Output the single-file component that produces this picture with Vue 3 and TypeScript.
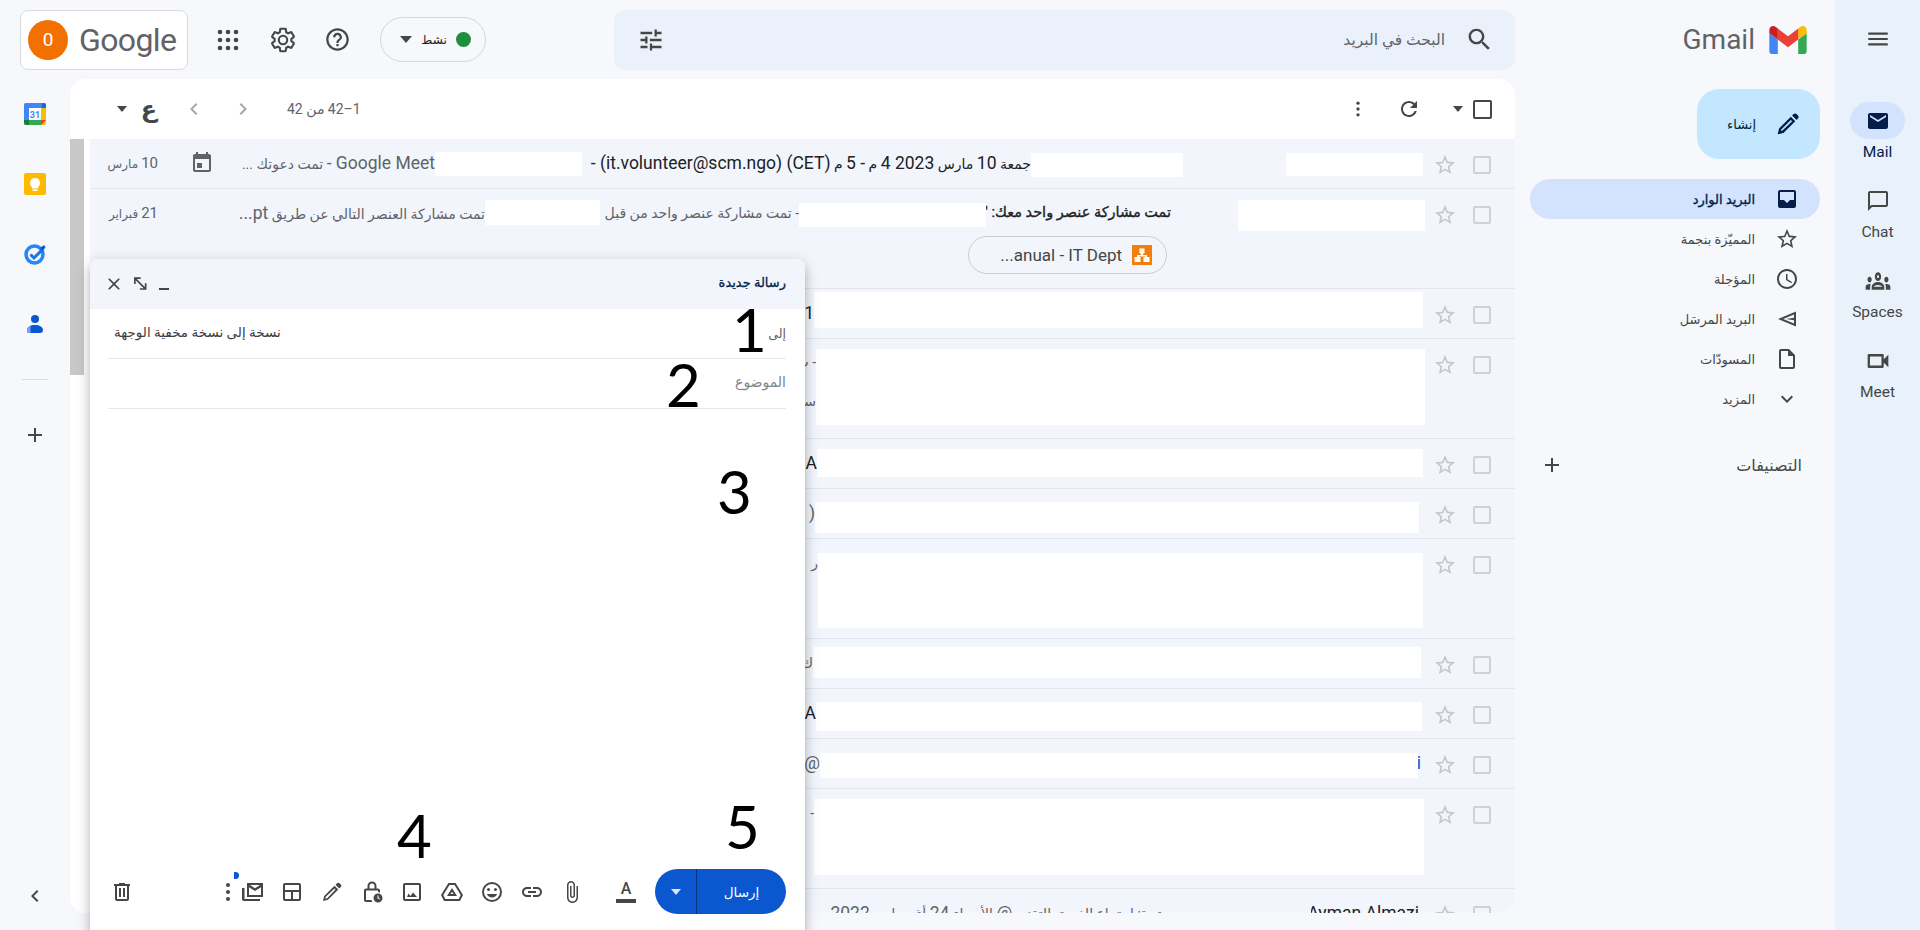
<script setup lang="ts">
interface Cell {
  kind: 'gap' | 'mask' | 'text'
  w: number
  top?: number
  h?: number
  text?: string
  tone?: string
}

interface Row {
  h: number
  cells: Cell[]
  date?: string
  event?: boolean
  chip?: boolean
}

const gap = (w: number): Cell => ({ kind: 'gap', w })
const mask = (w: number, top: number, h: number): Cell => ({ kind: 'mask', w, top, h })
const text = (w: number, t: string, tone = 'grey'): Cell => ({ kind: 'text', w, text: t, tone })

const rows: Row[] = [
  {
    h: 50,
    date: '10 مارس',
    event: true,
    cells: [
      gap(7), mask(137, 14, 23), gap(103), mask(152, 14, 24),
      text(449, 'جمعة 10 مارس 2023 4 م - 5 م (CET) (it.volunteer@scm.ngo) -', 'dark'),
      mask(147, 13, 24),
      text(207, 'Google Meet - تمت دعوتك ...'),
    ],
  },
  {
    h: 100,
    date: '21 فبراير',
    chip: true,
    cells: [
      gap(5), mask(187, 11, 31), gap(67),
      text(185, "تمت مشاركة عنصر واحد معك: '", 'bold'),
      mask(187, 14, 24),
      text(199, '- تمت مشاركة عنصر واحد من قبل'),
      mask(115, 11, 25),
      text(248, 'تمت مشاركة العنصر التالي عن طريق pt...'),
    ],
  },
  { h: 50, cells: [gap(7), mask(609, 3, 36), text(30, '21', 'dark')] },
  { h: 100, cells: [gap(5), mask(609, 10, 76), text(30, '- ت\nسر', 'grey two')] },
  { h: 50, cells: [gap(7), mask(606, 10, 28), text(30, 'n A', 'dark')] },
  { h: 50, cells: [gap(11), mask(604, 13, 31), text(30, '(')] },
  { h: 100, cells: [gap(7), mask(605, 14, 75), text(30, 'ر')] },
  { h: 50, cells: [gap(9), mask(608, 8, 31), text(30, 'ك')] },
  { h: 50, cells: [gap(8), mask(606, 13, 29), text(30, 'n A', 'dark')] },
  { h: 50, cells: [gap(9), text(3, 'i', 'link'), mask(598, 14, 25), text(30, '@')] },
  { h: 100, cells: [gap(6), mask(610, 10, 76), text(30, '-')] },
  {
    h: 50,
    cells: [
      gap(11), text(108, 'Ayman Almazi', 'dark'), gap(141),
      text(420, 'دعوة: اجتماع الفريق التقني @ الأربعاء 24 أغسطس 2022'),
    ],
  },
]

// latin runs are set larger than the arabic around them, like in the shot
const runs = (t = '') =>
  t
    .split(/([A-Za-z0-9@.()\-–]+(?: [A-Za-z0-9@.()\-–]+)*)/)
    .filter(Boolean)
    .map((s) => ({ s, lat: /[A-Za-z0-9@(]/.test(s) }))

const paths: Record<string, string> = {
  menu: 'M3 18h18v-2H3v2zm0-5h18v-2H3v2zm0-7v2h18V6H3z',
  search:
    'M15.5 14h-.79l-.28-.27C15.41 12.59 16 11.11 16 9.5 16 5.91 13.09 3 9.5 3S3 5.91 3 9.5 5.91 16 9.5 16c1.61 0 3.09-.59 4.23-1.57l.27.28v.79l5 4.99L20.49 19l-4.99-5zm-6 0C7.01 14 5 11.99 5 9.5S7.01 5 9.5 5 14 7.01 14 9.5 11.99 14 9.5 14z',
  tune: 'M3 17v2h6v-2H3zM3 5v2h10V5H3zm10 16v-2h8v-2h-8v-2h-2v6h2zM7 9v2H3v2h4v2h2V9H7zm14 4v-2H11v2h10zm-6-4h2V7h4V5h-4V3h-2v6z',
  help: 'M11 18h2v-2h-2v2zm1-16C6.48 2 2 6.48 2 12s4.48 10 10 10 10-4.48 10-10S17.52 2 12 2zm0 18c-4.41 0-8-3.59-8-8s3.59-8 8-8 8 3.59 8 8-3.59 8-8 8zm0-14c-2.21 0-4 1.79-4 4h2c0-1.1.9-2 2-2s2 .9 2 2c0 2-3 1.75-3 5h2c0-2.25 3-2.5 3-5 0-2.21-1.79-4-4-4z',
  refresh:
    'M17.65 6.35C16.2 4.9 14.21 4 12 4c-4.42 0-7.99 3.58-7.99 8s3.57 8 7.99 8c3.73 0 6.84-2.55 7.73-6h-2.08c-.82 2.33-3.04 4-5.65 4-3.31 0-6-2.69-6-6s2.69-6 6-6c1.66 0 3.14.69 4.22 1.78L13 11h7V4l-2.35 2.35z',
  star: 'M22 9.24l-7.19-.62L12 2 9.19 8.63 2 9.24l5.46 4.73L5.82 21 12 17.27 18.18 21l-1.63-7.03L22 9.24zM12 15.4l-3.76 2.27 1-4.28-3.32-2.88 4.38-.38L12 6.1l1.71 4.04 4.38.38-3.32 2.88 1 4.28L12 15.4z',
  inbox:
    'M19 3H5c-1.1 0-2 .9-2 2v14c0 1.1.9 2 2 2h14c1.1 0 2-.9 2-2V5c0-1.1-.9-2-2-2zm0 10h-4l-3 3-3-3H5V5h14v8z',
  clock:
    'M11.99 2C6.47 2 2 6.48 2 12s4.47 10 9.99 10C17.52 22 22 17.52 22 12S17.52 2 11.99 2zM12 20c-4.42 0-8-3.58-8-8s3.58-8 8-8 8 3.58 8 8-3.58 8-8 8zm.5-13H11v6l5.25 3.15.75-1.23-4.5-2.67z',
  send: 'M21 4.5 3 12l18 7.5v-15zm-2 3v3.3L11 12l8 1.2v3.3L8.2 12 19 7.5z',
  draft: 'M14 2H6c-1.1 0-2 .9-2 2v16c0 1.1.9 2 2 2h12c1.1 0 2-.9 2-2V8l-6-6zM6 20V4h7v5h5v11H6z',
  more: 'M16.59 8.59 12 13.17 7.41 8.59 6 10l6 6 6-6z',
  add: 'M19 13h-6v6h-2v-6H5v-2h6V5h2v6h6v2z',
  chat: 'M20 2H4c-1.1 0-2 .9-2 2v18l4-4h14c1.1 0 2-.9 2-2V4c0-1.1-.9-2-2-2zm0 14H5.17L4 17.17V4h16v12z',
  meet: 'M15 8v8H5V8h10m1-2H4c-.55 0-1 .45-1 1v10c0 .55.45 1 1 1h12c.55 0 1-.45 1-1v-3.5l4 4v-11l-4 4V7c0-.55-.45-1-1-1z',
  mail: 'M20 4H4c-1.1 0-2 .9-2 2v12c0 1.1.9 2 2 2h16c1.1 0 2-.9 2-2V6c0-1.1-.9-2-2-2zm0 4-8 5-8-5V6l8 5 8-5v2z',
  spaces:
    'M4 13c1.1 0 2-.9 2-2s-.9-2-2-2-2 .9-2 2 .9 2 2 2zm1.130 1.100c-.37-.06-.74-.1-1.130-.1-.99 0-1.930.21-2.780.58C.48 14.900 0 15.620 0 16.430V18h4.500v-1.610c0-.83.23-1.610.63-2.290zM20 13c1.100 0 2-.9 2-2s-.9-2-2-2-2 .9-2 2 .9 2 2 2zm4 3.430c0-.81-.48-1.530-1.220-1.850-.85-.37-1.790-.58-2.780-.58-.39 0-.76.04-1.130.1.4.68.63 1.460.63 2.290V18H24v-1.570zm-7.760-2.780C15.070 13.140 13.630 12.750 12 12.750s-3.070.4-4.240.91C6.680 14.130 6 15.210 6 16.390V18h12v-1.610c0-1.180-.68-2.260-1.760-2.740zM8.040 16c.09-.23.13-.39.91-.69.97-.38 1.990-.56 3.050-.56s2.090.18 3.060.56c.77.3.81.46.91.69H8.040zM12 8c.55 0 1 .45 1 1s-.45 1-1 1-1-.45-1-1 .45-1 1-1m0-2c-1.660 0-3 1.340-3 3s1.340 3 3 3 3-1.340 3-3-1.340-3-3-3z',
  compose:
    'M2.500 21.500l1.200-5.300L14.600 5.300l4.100 4.100L7.800 20.300l-5.300 1.200zm3-3 1.400-.4 8.900-8.700-1.200-1.200-8.800 8.900-.3 1.400zM15.800 4.100l1.300-1.300c.8-.8 2-.8 2.800 0l1.300 1.300c.8.8.8 2 0 2.800l-1.300 1.300-4.100-4.100z',
  event:
    'M7 12h5v5H7zM16 1v2H8V1H6v2H5c-1.110 0-2 .9-2 2v14c0 1.100.9 2 2 2h14c1.100 0 2-.9 2-2V5c0-1.100-.9-2-2-2h-1V1h-2zm3 18H5V8h14v11z',
  trash: 'M15 4V3H9v1H4v2h1v13c0 1.100.9 2 2 2h10c1.100 0 2-.9 2-2V6h1V4h-5zm2 15H7V6h10v13zM9 8h2v9H9zm4 0h2v9h-2z',
  attach:
    'M16.500 6v11.500c0 2.210-1.790 4-4 4s-4-1.790-4-4V5c0-1.380 1.120-2.500 2.500-2.500s2.500 1.120 2.500 2.500v10.500c0 .55-.45 1-1 1s-1-.45-1-1V6H10v9.500c0 1.380 1.120 2.500 2.500 2.500s2.500-1.120 2.500-2.500V5c0-2.210-1.790-4-4-4S7 2.790 7 5v12.500c0 3.040 2.460 5.500 5.500 5.500s5.500-2.460 5.500-5.500V6h-1.500z',
  link: 'M3.900 12c0-1.710 1.390-3.100 3.100-3.100h4V7H7c-2.760 0-5 2.240-5 5s2.240 5 5 5h4v-1.900H7c-1.710 0-3.100-1.390-3.100-3.100zM8 13h8v-2H8v2zm9-6h-4v1.900h4c1.710 0 3.100 1.390 3.100 3.100s-1.390 3.100-3.100 3.100h-4V17h4c2.760 0 5-2.240 5-5s-2.240-5-5-5z',
  smile:
    'M12 2a10 10 0 1 0 0 20 10 10 0 0 0 0-20zm0 18a8 8 0 1 1 0-16 8 8 0 0 1 0 16zM8.500 11a1.500 1.500 0 1 0 0-3 1.500 1.500 0 0 0 0 3zm7 0a1.500 1.500 0 1 0 0-3 1.500 1.500 0 0 0 0 3zM12 17.500c2.300 0 4.300-1.500 5.100-3.500H6.900c.8 2 2.800 3.500 5.100 3.500z',
  drive:
    'M8.400 3h7.200L23 15l-3 6H4l-3-6L8.400 3zM9.500 5 3.300 15l2 4h13.400l2-4L14.500 5h-5zM12 8l5 8H7l5-8zm0 3.800L10.600 14h2.800L12 11.800z',
  photo:
    'M21 19V5c0-1.100-.9-2-2-2H5c-1.100 0-2 .9-2 2v14c0 1.100.9 2 2 2h14c1.100 0 2-.9 2-2zM5 5h14v14H5V5zm3.500 8.500 2 2.500 2.500-3.500 4 4.500H7l1.500-3.500z',
  lock:
    'M12 1.500a4.500 4.500 0 0 0-4.500 4.500v2.500H6c-1.100 0-2 .9-2 2V20c0 1.100.9 2 2 2h6.500a6 6 0 0 1-1-2H6v-9.500h12v1.600c.7.100 1.400.300 2 .600V10.500c0-1.100-.9-2-2-2h-1.500V6A4.500 4.500 0 0 0 12 1.500zM9.500 8.500V6a2.500 2.500 0 0 1 5 0v2.500h-5zM18 13.500a4.500 4.500 0 1 0 0 9 4.500 4.500 0 0 0 0-9zm-.5 2h1v2.300l1.600 1-.5.8-2.100-1.300v-2.800z',
  pen: 'M3 21l1.200-5L14.500 5.700l3.800 3.800L8 19.800 3 21zM5.800 16.800l-.6 2 2-.6 8.300-8.700-1-1-8.700 8.300zM15.500 4.700 17 3.200c.7-.7 1.800-.7 2.500 0l1.300 1.300c.7.7.7 1.800 0 2.500l-1.500 1.500-3.800-3.800z',
  template:
    'M19 3H5c-1.100 0-2 .9-2 2v14c0 1.100.9 2 2 2h14c1.100 0 2-.9 2-2V5c0-1.100-.9-2-2-2zM5 5h14v5H5V5zm0 7h6v7H5v-7zm8 7v-7h6v7h-6z',
  multi:
    'M7 3h16v14H7V3zm2 4.300V15h12V7.300l-6 3.700-6-3.700zM10 5l5 3.200L20 5H10zM2 8h2.500v11H20v2H4c-1.100 0-2-.9-2-2V8z',
  close: 'M19 6.410 17.590 5 12 10.590 6.410 5 5 6.410 10.590 12 5 17.590 6.410 19 12 13.410 17.590 19 19 17.590 13.410 12z',
  expand: 'M6 4h8v2H9.400l9.600 9.600V11h2v8h-8v-2h4.600L8 7.400V12H6V4z',
}

const navItems = [
  { icon: 'inbox', label: 'البريد الوارد', active: true },
  { icon: 'star', label: 'المميّزة بنجمة' },
  { icon: 'clock', label: 'المؤجلة' },
  { icon: 'send', label: 'البريد المرسَل' },
  { icon: 'draft', label: 'المسودّات' },
  { icon: 'more', label: 'المزيد' },
]

const railItems = [
  { icon: 'mail', label: 'Mail', active: true },
  { icon: 'chat', label: 'Chat' },
  { icon: 'spaces', label: 'Spaces' },
  { icon: 'meet', label: 'Meet' },
]

const composeTools = ['attach', 'link', 'smile', 'drive', 'photo', 'lock', 'pen', 'template', 'multi']
</script>

<template>
  <div class="app">
    <header class="topbar">
      <div class="account">
        <span class="avatar">0</span>
        <span class="google">Google</span>
      </div>
      <svg class="ic apps" viewBox="0 0 24 24">
        <template v-for="y in [4, 12, 20]" :key="y">
          <circle v-for="x in [4, 12, 20]" :key="x" :cx="x" :cy="y" r="2.3" />
        </template>
      </svg>
      <svg class="gear" viewBox="0 0 24 24">
        <path
          d="M19.140 12.940c.04-.3.06-.61.06-.94 0-.32-.02-.64-.07-.94l2.030-1.580c.18-.14.23-.41.12-.61l-1.920-3.320c-.12-.22-.37-.29-.59-.22l-2.390.96c-.5-.38-1.030-.7-1.620-.94l-.36-2.540c-.04-.24-.24-.41-.48-.41h-3.840c-.24 0-.43.17-.47.41l-.36 2.540c-.59.24-1.130.57-1.620.94l-2.390-.96c-.22-.08-.47 0-.59.22L2.740 8.870c-.12.21-.08.47.12.61l2.030 1.580c-.05.3-.09.63-.09.94s.02.64.07.94l-2.030 1.580c-.18.14-.23.41-.12.61l1.920 3.320c.12.22.37.29.59.22l2.390-.96c.5.38 1.030.7 1.620.94l.36 2.540c.05.24.24.41.48.41h3.840c.24 0 .44-.17.47-.41l.36-2.540c.59-.24 1.130-.56 1.620-.94l2.390.96c.22.08.47 0 .59-.22l1.920-3.320c.12-.22.07-.47-.12-.61l-2.010-1.580zM12 15.600c-1.980 0-3.600-1.620-3.600-3.600s1.620-3.600 3.600-3.600 3.600 1.620 3.600 3.600-1.620 3.600-3.600 3.600z"
        />
      </svg>
      <svg class="ic help" viewBox="0 0 24 24"><path :d="paths.help" /></svg>
      <div class="status">
        <i class="caret" />
        <span>نشط</span>
        <i class="dot" />
      </div>
      <div class="search">
        <svg class="ic tune" viewBox="0 0 24 24"><path :d="paths.tune" /></svg>
        <span class="search-text">البحث في البريد</span>
        <svg class="ic search-ic" viewBox="0 0 24 24"><path :d="paths.search" /></svg>
      </div>
    </header>

    <aside class="addons">
      <svg class="addon" viewBox="0 0 24 24">
        <rect x="1" y="1" width="22" height="22" rx="2" fill="#fbbc04" />
        <path d="M1 6V3a2 2 0 0 1 2-2h16v5z" fill="#4285f4" />
        <path d="M19 1h2a2 2 0 0 1 2 2v3h-4z" fill="#1967d2" />
        <path d="M1 6h5v12H1z" fill="#4285f4" />
        <path d="M1 18h5v5H3a2 2 0 0 1-2-2z" fill="#188038" />
        <path d="M6 18h12v5H6z" fill="#34a853" />
        <path d="M18 18h5l-5 5z" fill="#ea4335" />
        <rect x="6" y="6" width="12" height="12" fill="#fff" />
        <text x="12" y="15.500" class="cal-text">31</text>
      </svg>
      <svg class="addon keep" viewBox="0 0 24 24">
        <rect x="1" y="1" width="22" height="22" rx="2" fill="#ffba00" />
        <path d="M12 6a5 5 0 0 0-3 9v1.500h6V15a5 5 0 0 0-3-9zM9.500 17.500h5V19h-5z" fill="#fff" />
      </svg>
      <svg class="addon tasks" viewBox="0 0 24 24">
        <circle cx="11.500" cy="12.500" r="8.500" fill="none" stroke="#2684fc" stroke-width="3.500" />
        <path d="M7.500 12.500l3.500 3.500 8-8" fill="none" stroke="#1a73e8" stroke-width="3" />
        <path d="M17 6l4-3 1.500 2.500-3 3.500z" fill="#0b57d0" />
      </svg>
      <svg class="addon contacts" viewBox="0 0 24 24">
        <circle cx="12" cy="7" r="4" fill="#0b57d0" />
        <path d="M4 21v-3c0-3 3.500-5 8-5s8 2 8 5c0 2-1 3-3 3z" fill="#0b57d0" />
        <path d="M4 21v-3c0-2 1.500-3.500 3.500-4.200V21z" fill="#79a6ee" />
      </svg>
      <hr class="addon-sep" />
      <svg class="ic addon-add" viewBox="0 0 24 24"><path :d="paths.add" /></svg>
      <svg class="ic addon-hide" viewBox="0 0 24 24"><path d="M15.410 7.410 14 6l-6 6 6 6 1.410-1.410L10.830 12z" /></svg>
    </aside>

    <main class="panel">
      <div class="toolbar">
        <i class="caret small" />
        <span class="ime">ع</span>
        <svg class="ic pager first" viewBox="0 0 24 24"><path d="M15.410 7.410 14 6l-6 6 6 6 1.410-1.410L10.830 12z" /></svg>
        <svg class="ic pager" viewBox="0 0 24 24"><path d="M8.590 16.590 10 18l6-6-6-6-1.410 1.410L13.170 12z" /></svg>
        <span class="count" dir="rtl">1–42 من 42</span>
        <span class="spacer" />
        <svg class="ic tool-dots" viewBox="0 0 24 24">
          <circle cx="12" cy="5" r="2" /><circle cx="12" cy="12" r="2" /><circle cx="12" cy="19" r="2" />
        </svg>
        <svg class="ic tool-refresh" viewBox="0 0 24 24"><path :d="paths.refresh" /></svg>
        <i class="caret small tool-caret" />
        <i class="box dark" />
      </div>
      <div class="list-wrap">
        <div class="scroll"><div class="thumb" /></div>
        <div class="list">
          <div v-for="(row, i) in rows" :key="i" class="row" :style="{ height: row.h + 'px' }">
            <div class="date">
              <span v-for="(run, k) in runs(row.date)" :key="k" :class="{ lat: run.lat }">{{ run.s }}</span>
            </div>
            <div class="event-cell">
              <svg v-if="row.event" class="ic" viewBox="0 0 24 24"><path :d="paths.event" /></svg>
            </div>
            <div class="content">
              <div class="cells">
                <template v-for="(cell, j) in row.cells" :key="j">
                  <div
                    v-if="cell.kind === 'mask'"
                    class="mask"
                    :style="{ width: cell.w + 'px', height: cell.h + 'px', marginTop: cell.top + 'px' }"
                  />
                  <div v-else-if="cell.kind === 'gap'" class="cell-gap" :style="{ width: cell.w + 'px' }" />
                  <div v-else class="cell-text" :class="cell.tone" :style="{ width: cell.w + 'px' }">
                    <span v-for="(run, k) in runs(cell.text)" :key="k" :class="{ lat: run.lat }">{{ run.s }}</span>
                  </div>
                </template>
              </div>
              <div v-if="row.chip" class="chip">
                <svg class="chip-icon" viewBox="0 0 20 20">
                  <rect width="20" height="20" fill="#f37e0b" />
                  <path d="M7.500 3.500h5v5H11V10h4v2h2.500v5h-6v-5H13v-.5H7v.5h1.500v5h-6v-5H5v-2h4V8.500H7.500z" fill="#fff" />
                </svg>
                <span dir="ltr">...anual - IT Dept</span>
              </div>
            </div>
            <svg class="star" viewBox="0 0 24 24"><path :d="paths.star" /></svg>
            <i class="box" />
          </div>
        </div>
      </div>
    </main>

    <nav class="sidebar">
      <div class="brand">
        <span class="gmail">Gmail</span>
        <svg class="gmail-m" viewBox="52 42 88 66">
          <path fill="#4285f4" d="M58 108h14V74L52 59v43c0 3.320 2.690 6 6 6" />
          <path fill="#34a853" d="M120 108h14c3.320 0 6-2.690 6-6V59l-20 15" />
          <path fill="#fbbc04" d="M120 48v26l20-15v-8c0-7.420-8.470-11.650-14.400-7.200" />
          <path fill="#ea4335" d="M72 74V48l24 18 24-18v26L96 92" />
          <path fill="#c5221f" d="M52 51v8l20 15V48l-5.600-4.200c-5.940-4.450-14.400-.22-14.400 7.200" />
        </svg>
      </div>
      <button class="compose-btn">
        <span>إنشاء</span>
        <svg class="nav-ic pencil" viewBox="0 0 24 24"><path :d="paths.compose" /></svg>
      </button>
      <div class="nav">
        <div v-for="item in navItems" :key="item.icon" class="nav-item" :class="{ active: item.active }">
          <span>{{ item.label }}</span>
          <svg class="nav-ic" viewBox="0 0 24 24"><path :d="paths[item.icon]" /></svg>
        </div>
      </div>
      <div class="labels">
        <svg class="ic" viewBox="0 0 24 24"><path :d="paths.add" /></svg>
        <span>التصنيفات</span>
      </div>
    </nav>

    <aside class="rail">
      <svg class="ic rail-menu" viewBox="0 0 24 24"><path :d="paths.menu" /></svg>
      <div v-for="item in railItems" :key="item.label" class="rail-item" :class="[item.icon, { active: item.active }]">
        <div class="rail-pill">
          <svg class="ic" viewBox="0 0 24 24"><path :d="paths[item.icon]" /></svg>
        </div>
        <span>{{ item.label }}</span>
      </div>
    </aside>

    <section class="compose">
      <div class="compose-head">
        <span class="compose-title">رسالة جديدة</span>
        <span class="spacer" />
        <i class="minimize" />
        <svg class="head-ic" viewBox="0 0 24 24"><path :d="paths.expand" /></svg>
        <svg class="head-ic" viewBox="0 0 24 24"><path :d="paths.close" /></svg>
      </div>
      <div class="field">
        <span class="to">إلى</span>
        <span class="spacer" />
        <span class="bcc">نسخة إلى نسخة مخفية الوجهة</span>
      </div>
      <div class="field">
        <span class="subject">الموضوع</span>
      </div>
      <div class="compose-body" />
      <div class="compose-foot">
        <div class="send">
          <span class="send-label">إرسال</span>
          <span class="send-more"><i class="caret light" /></span>
        </div>
        <div class="format">
          <span class="format-a">A</span>
          <i class="format-bar" />
        </div>
        <div class="tools">
          <svg v-for="tool in composeTools" :key="tool" class="tool" viewBox="0 0 24 24"><path :d="paths[tool]" /></svg>
          <div class="tool-more">
            <i /><i /><i />
            <b class="badge" />
          </div>
        </div>
        <span class="spacer" />
        <svg class="tool trash" viewBox="0 0 24 24"><path :d="paths.trash" /></svg>
      </div>
    </section>

    <span class="mark m1">1</span>
    <span class="mark m2">2</span>
    <span class="mark m3">3</span>
    <span class="mark m4">4</span>
    <span class="mark m5">5</span>
  </div>
</template>

<style>
html,
body {
  margin: 0;
  overflow: hidden;
}
</style>

<style scoped>
.app {
  position: relative;
  width: 1920px;
  height: 930px;
  overflow: hidden;
  display: grid;
  grid-template-columns: 70px 1445px 320px 85px;
  grid-template-rows: 79px 851px;
  background: #f6f8fc;
  font-family: Roboto, 'DejaVu Sans', sans-serif;
  color: #202124;
}
.ic {
  width: 24px;
  height: 24px;
  fill: #444746;
  flex: none;
}
.spacer {
  flex: 1;
}
.caret {
  width: 0;
  height: 0;
  border-left: 6px solid transparent;
  border-right: 6px solid transparent;
  border-top: 7px solid #444746;
  flex: none;
}
.caret.small {
  border-left-width: 5px;
  border-right-width: 5px;
  border-top-width: 6px;
}
.caret.light {
  border-top-color: #d6e6ff;
  border-left-width: 5px;
  border-right-width: 5px;
  border-top-width: 6px;
}

/* top */
.topbar {
  grid-column: 1 / 3;
  display: flex;
  align-items: center;
  height: 79px;
  padding: 0 0 0 20px;
  box-sizing: border-box;
}
.account {
  width: 168px;
  height: 60px;
  box-sizing: border-box;
  background: #fff;
  border: 1px solid #dadce0;
  border-radius: 8px;
  display: flex;
  align-items: center;
  padding-left: 7px;
  gap: 11px;
}
.avatar {
  width: 40px;
  height: 40px;
  border-radius: 50%;
  background: #f27000;
  color: #fff;
  font-size: 19px;
  display: flex;
  align-items: center;
  justify-content: center;
}
.google {
  font-size: 32px;
  letter-spacing: -0.6px;
  color: #5f6368;
  line-height: 40px;
}
.apps {
  margin-left: 28px;
}
.gear {
  width: 28px;
  height: 28px;
  margin-left: 29px;
  fill: none;
  stroke: #444746;
  stroke-width: 1.8;
  flex: none;
}
.help {
  width: 27px;
  height: 27px;
  margin-left: 27px;
}
.status {
  width: 106px;
  height: 45px;
  box-sizing: border-box;
  margin-left: 29px;
  border: 1px solid #d3d7dc;
  border-radius: 23px;
  display: flex;
  align-items: center;
  padding: 0 14px 0 19px;
  font-size: 12px;
}
.status span {
  margin-left: 9px;
  width: 26px;
  text-align: center;
  white-space: nowrap;
}
.dot {
  width: 15px;
  height: 15px;
  margin-left: 9px;
  border-radius: 50%;
  background: #1e8e3e;
  flex: none;
}
.search {
  width: 901px;
  height: 60px;
  margin-left: 128px;
  background: #eaf1fb;
  border-radius: 12px;
  display: flex;
  align-items: center;
  padding: 0 21px 0 23px;
  box-sizing: border-box;
}
.tune {
  width: 28px;
  height: 28px;
}
.search-ic {
  width: 29px;
  height: 29px;
}
.search-text {
  flex: 1;
  text-align: right;
  margin-right: 20px;
  font-size: 15.500px;
  color: #5f6368;
}

/* addons */
.addons {
  grid-column: 1;
  grid-row: 2;
  display: flex;
  flex-direction: column;
  align-items: center;
  padding-top: 22px;
}
.addon {
  width: 24px;
  height: 26px;
  flex: none;
}
.cal-text {
  font-size: 9px;
  font-weight: 700;
  fill: #4285f4;
  text-anchor: middle;
}
.keep {
  margin-top: 44px;
}
.tasks {
  margin-top: 44px;
}
.contacts {
  margin-top: 44px;
}
.addon-sep {
  width: 26px;
  margin: 42px 0 0;
  border: 0;
  border-top: 1px solid #dadce0;
}
.addon-add {
  margin-top: 43px;
}
.addon-hide {
  margin-top: 437px;
}

/* mail panel */
.panel {
  grid-column: 2;
  grid-row: 2;
  height: 834px;
  border-radius: 16px;
  background: #fff;
  overflow: hidden;
  display: flex;
  flex-direction: column;
}
.toolbar {
  height: 60px;
  flex: none;
  display: flex;
  align-items: center;
  padding-left: 47px;
  padding-right: 23px;
}
.ime {
  font-size: 24px;
  font-weight: 700;
  margin-left: 10px;
  width: 24px;
  text-align: center;
  color: #444746;
}
.pager {
  fill: #a5a8ab;
}
.pager.first {
  margin-left: 21px;
}
.pager + .pager {
  margin-left: 25px;
}
.count {
  font-size: 14px;
  margin-left: 32px;
  color: #5f6368;
}
.tool-dots {
  width: 20px;
  height: 20px;
}
.tool-refresh {
  margin-left: 29px;
}
.tool-caret {
  margin-left: 32px;
}
.box {
  width: 14px;
  height: 14px;
  margin-left: 10px;
  border: 2px solid #cfd1d4;
  border-radius: 2px;
  flex: none;
}
.box.dark {
  width: 15px;
  height: 15px;
  border-color: #444746;
}
.list-wrap {
  flex: 1;
  display: flex;
  min-height: 0;
}
.scroll {
  width: 20px;
  flex: none;
}
.thumb {
  width: 14px;
  height: 236px;
  background: #c8c8c8;
}
.list {
  flex: 1;
  min-width: 0;
  background: #f2f6fc;
}
.row {
  box-sizing: border-box;
  display: flex;
  align-items: flex-start;
  border-bottom: 1px solid #e1e6ec;
  font-size: 14px;
}
.date {
  width: 68px;
  flex: none;
  font-size: 12px;
  line-height: 48px;
  color: #5f6368;
  direction: rtl;
  text-align: right;
  white-space: nowrap;
}
.date .lat {
  font-size: 15px;
}
.event-cell {
  width: 24px;
  height: 48px;
  margin-left: 32px;
  flex: none;
  display: flex;
  align-items: center;
}
.event-cell svg {
  fill: #5f6368;
}
.content {
  flex: 1;
  min-width: 0;
}
.cells {
  display: flex;
  direction: rtl;
  align-items: flex-start;
}
.mask {
  background: #fff;
  flex: none;
}
.cell-gap {
  flex: none;
}
.cell-text {
  flex: none;
  white-space: nowrap;
  overflow: hidden;
  line-height: 48px;
  text-align: right;
}
.cell-text .lat {
  font-size: 17.500px;
}
.cell-text.two {
  white-space: pre;
  line-height: 39px;
  padding-top: 4px;
}
.grey {
  color: #5f6368;
}
.dark {
  color: #202124;
}
.bold {
  color: #202124;
  font-size: 14.500px;
  -webkit-text-stroke: 0.35px #202124;
}
.link {
  color: #0b57d0;
}
.chip {
  width: 199px;
  height: 38px;
  box-sizing: border-box;
  margin: -2px 263px 0 auto;
  border: 1px solid #c9ced4;
  border-radius: 19px;
  display: flex;
  flex-direction: row-reverse;
  align-items: center;
  padding-right: 14px;
  gap: 10px;
  font-size: 17px;
  color: #444746;
  white-space: nowrap;
}
.chip-icon {
  width: 20px;
  height: 20px;
  flex: none;
}
.star {
  width: 24px;
  height: 24px;
  fill: #c4c7c9;
  margin: 14px 0 0 3px;
  flex: none;
}
.row > .box {
  margin: 17px 24px 0 16px;
}

/* sidebar */
.sidebar {
  grid-column: 3;
  grid-row: 1 / 3;
  display: flex;
  flex-direction: column;
}
.brand {
  height: 79px;
  display: flex;
  align-items: center;
  justify-content: flex-end;
  padding-right: 28px;
  gap: 14px;
}
.gmail {
  font-size: 28px;
  color: #5f6368;
}
.gmail-m {
  width: 38px;
  height: 28px;
}
.compose-btn {
  width: 123px;
  height: 70px;
  margin: 10px 15px 0 auto;
  border: 0;
  border-radius: 22px;
  background: #c2e7ff;
  display: flex;
  align-items: center;
  justify-content: flex-end;
  padding: 0 19px 0 0;
  gap: 19px;
  font: inherit;
  font-size: 13px;
  color: #001d35;
}
.nav-ic {
  width: 24px;
  height: 24px;
  fill: #444746;
  flex: none;
}
.nav-ic.pencil {
  width: 26px;
  height: 26px;
  fill: #041e49;
}
.nav {
  margin-top: 20px;
  display: flex;
  flex-direction: column;
  margin-right: 15px;
  margin-left: 15px;
}
.nav-item {
  height: 40px;
  border-radius: 20px;
  display: flex;
  align-items: center;
  justify-content: flex-end;
  gap: 20px;
  padding-right: 21px;
  font-size: 13px;
  color: #444746;
}
.nav-item.active {
  background: #d3e3fd;
  color: #041e49;
  -webkit-text-stroke: 0.35px #041e49;
}
.nav-item.active .nav-ic {
  fill: #041e49;
}
.labels {
  margin-top: 34px;
  display: flex;
  align-items: center;
  justify-content: space-between;
  padding: 0 33px 0 25px;
  font-size: 16px;
  color: #444746;
}

/* right rail */
.rail {
  grid-column: 4;
  grid-row: 1 / 3;
  background: #e9f1fb;
  display: flex;
  flex-direction: column;
  align-items: center;
}
.rail-menu {
  width: 26px;
  height: 26px;
  margin: 26px 0 50px;
  flex: none;
}
.rail-item {
  height: 80px;
  display: flex;
  flex-direction: column;
  align-items: center;
  font-size: 15.500px;
  color: #444746;
}
.rail-pill {
  width: 55px;
  height: 37px;
  border-radius: 19px;
  display: flex;
  align-items: center;
  justify-content: center;
  margin-bottom: 4px;
}
.rail-item.active {
  color: #041e49;
}
.rail-item.active .rail-pill {
  background: #d3e3fd;
}
.rail-item.active .ic {
  fill: #041e49;
}
.rail-item.spaces .ic {
  transform: scale(1.05, 1.45);
}
.rail-item.meet .ic {
  transform: scale(1.15);
}

/* compose window */
.compose {
  position: absolute;
  left: 90px;
  top: 259px;
  width: 715px;
  height: 671px;
  background: #fff;
  border-radius: 8px 8px 0 0;
  box-shadow: 0 8px 10px 1px rgba(0, 0, 0, 0.14), 0 3px 14px 2px rgba(0, 0, 0, 0.12), 0 5px 5px -3px rgba(0, 0, 0, 0.2);
  display: flex;
  flex-direction: column;
}
.compose-head {
  height: 50px;
  flex: none;
  background: #f2f6fc;
  border-radius: 8px 8px 0 0;
  display: flex;
  flex-direction: row-reverse;
  align-items: center;
  padding: 0 19px 0 14px;
}
.compose-title {
  font-size: 13px;
  color: #041e49;
  -webkit-text-stroke: 0.3px #041e49;
  margin-top: -4px;
}
.minimize {
  width: 10px;
  height: 2px;
  margin: 10px 10px 0 5px;
  background: #444746;
}
.head-ic {
  width: 20px;
  height: 20px;
  fill: #444746;
  margin-right: 5px;
  flex: none;
}
.compose-head .spacer {
  order: -3;
}
.compose-head .compose-title {
  order: -4;
}
.compose-head .head-ic:nth-of-type(1) {
  order: -1;
}
.compose-head .minimize {
  order: -2;
}
.field {
  height: 50px;
  margin: 0 19px 0 18px;
  box-sizing: border-box;
  border-bottom: 1px solid #e6e9ec;
  display: flex;
  flex-direction: row-reverse;
  align-items: center;
  font-size: 12.500px;
}
.to {
  color: #5f6368;
}
.bcc {
  color: #3c4043;
  font-size: 13.500px;
  margin-left: 6px;
  margin-top: -4px;
  white-space: nowrap;
}
.subject {
  color: #80868b;
  font-size: 14px;
  margin-top: -4px;
}
.compose-body {
  flex: 1;
}
.compose-foot {
  height: 45px;
  margin: 0 19px 16px 20px;
  display: flex;
  flex-direction: row-reverse;
  align-items: center;
  flex: none;
}
.send {
  width: 131px;
  height: 45px;
  border-radius: 23px;
  background: #0b57d0;
  color: #fff;
  display: flex;
  flex-direction: row-reverse;
  font-size: 13.500px;
  flex: none;
}
.send-label {
  flex: 1;
  display: flex;
  align-items: center;
  justify-content: center;
}
.send-more {
  width: 40px;
  border-right: 1px solid #04327c;
  display: flex;
  align-items: center;
  justify-content: center;
  padding-left: 1px;
}
.format {
  width: 22px;
  margin-right: 18px;
  display: flex;
  flex-direction: column;
  align-items: center;
  flex: none;
}
.format-a {
  font-size: 16px;
  font-weight: 500;
  line-height: 18px;
  color: #444746;
}
.format-bar {
  width: 20px;
  height: 4px;
  margin-top: 1px;
  background: #444746;
}
.tools {
  display: flex;
  flex-direction: row-reverse;
  align-items: center;
  margin-right: 31px;
}
.tool {
  width: 24px;
  height: 24px;
  fill: #444746;
  margin-left: 16px;
  flex: none;
}
.tool-more {
  position: relative;
  width: 6px;
  display: flex;
  flex-direction: column;
  gap: 3px;
  margin-right: -8px;
}
.tool-more i {
  width: 4px;
  height: 4px;
  border-radius: 50%;
  background: #444746;
}
.badge {
  position: absolute;
  left: 8px;
  top: -11px;
  width: 5px;
  height: 7px;
  border-radius: 0 4px 4px 0;
  background: #0b57d0;
}
.trash {
  margin-left: 0;
  margin-right: 0;
}

/* hand-drawn numbers sitting over the shot */
.mark {
  position: absolute;
  font-family: Lato, sans-serif;
  font-size: 60px;
  line-height: 60px;
  color: #000;
}
.m1 {
  left: 732px;
  top: 299px;
}
.m2 {
  left: 666px;
  top: 354px;
}
.m3 {
  left: 717px;
  top: 461px;
}
.m4 {
  left: 397px;
  top: 805px;
}
.m5 {
  left: 725px;
  top: 796px;
}
</style>
